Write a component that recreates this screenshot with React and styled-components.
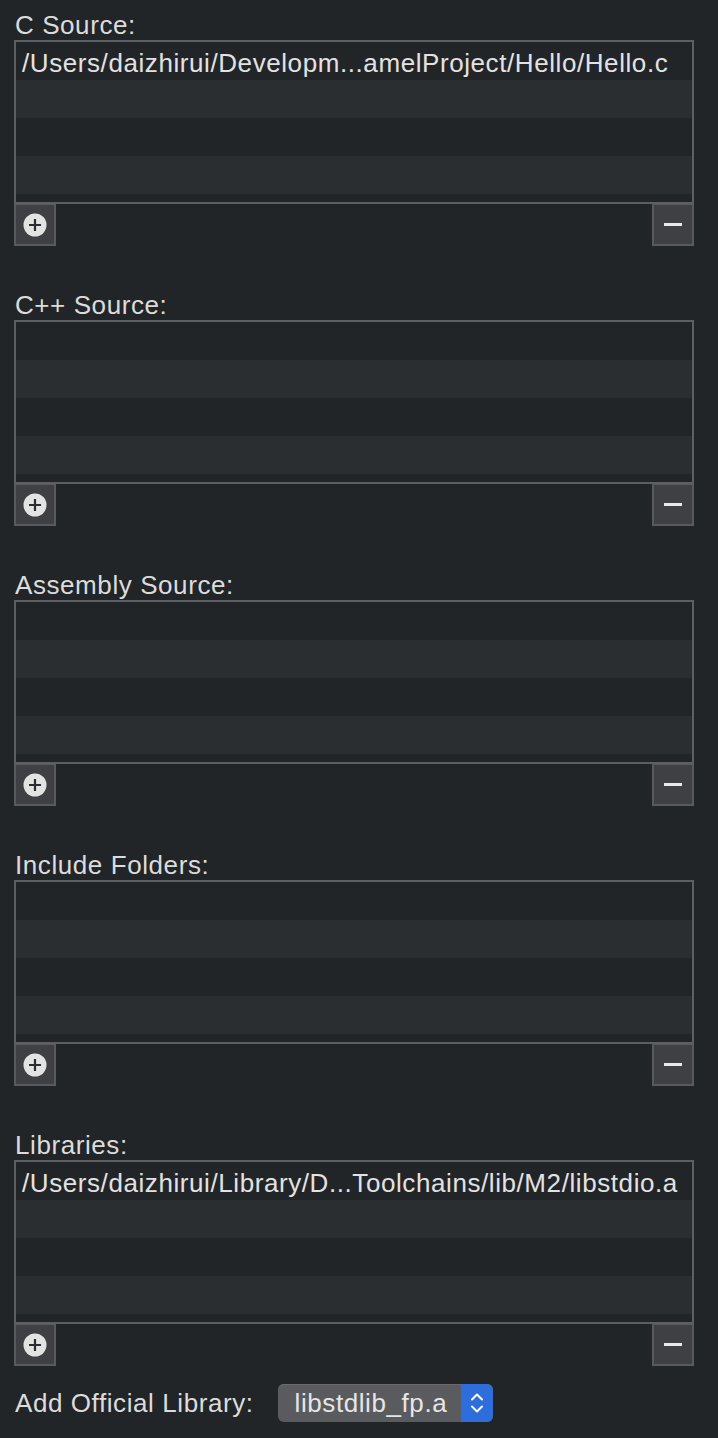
import React from 'react';
import styled, { createGlobalStyle } from "styled-components"

const GlobalStyle = createGlobalStyle`
    html, body {
        margin: 0;
        padding: 0;
        background: #222528;
    }
    body {
        font-family: "Liberation Sans", Arial, sans-serif;
        color: #dedede;
    }
`

const sections = [
    { title: "C Source:", items: ["/Users/daizhirui/Developm...amelProject/Hello/Hello.c"] },
    { title: "C++ Source:", items: [] },
    { title: "Assembly Source:", items: [] },
    { title: "Include Folders:", items: [] },
    { title: "Libraries:", items: ["/Users/daizhirui/Library/D...Toolchains/lib/M2/libstdio.a"] },
]

const PlusIcon = () => (
    <svg width="24" height="24" viewBox="0 0 24 24">
        <circle cx="12" cy="12" r="11.5" fill="#e3e3e3" />
        <path d="M12 6v12M6 12h12" stroke="#2a2c2f" strokeWidth="2.2" />
    </svg>
)

const Chevrons = () => (
    <svg width="16" height="26" viewBox="0 0 16 26">
        <path d="M3 9.5L8 4.5L13 9.5" fill="none" stroke="#fff" strokeWidth="2" strokeLinecap="round" strokeLinejoin="round" />
        <path d="M3 16.5L8 21.5L13 16.5" fill="none" stroke="#fff" strokeWidth="2" strokeLinecap="round" strokeLinejoin="round" />
    </svg>
)

const FileList = ({ title, items }) => {
    const rows = [0, 1, 2, 3, 4].map(i => items[i] || "")
    return (
        <Section>
            <Label>{title}</Label>
            <ListBox>
                {rows.map((text, i) => (
                    <Row key={i} $odd={i % 2 === 1}>{text}</Row>
                ))}
            </ListBox>
            <ButtonBar>
                <SquareButton><PlusIcon /></SquareButton>
                <SquareButton><MinusBar /></SquareButton>
            </ButtonBar>
        </Section>
    )
}

const App = () => {
    return (
        <Wrapper>
            <GlobalStyle />
            {sections.map(s => (
                <FileList key={s.title} title={s.title} items={s.items} />
            ))}
            <OfficialRow>
                <Label>Add Official Library:</Label>
                <Popup>
                    <PopupValue>libstdlib_fp.a</PopupValue>
                    <PopupArrows><Chevrons /></PopupArrows>
                </Popup>
            </OfficialRow>
        </Wrapper>
    )
}

export default App

const Wrapper = styled.div`
    width: 718px;
    height: 1438px;
    padding: 10px 24px 0 14px;
    box-sizing: border-box;
    display: flex;
    flex-direction: column;
    gap: 44px;
    overflow: hidden;
`

const Section = styled.div`
    display: flex;
    flex-direction: column;
`

const Label = styled.div`
    font-size: 26px;
    line-height: 30px;
    letter-spacing: 0.58px;
    padding-left: 1px;
    color: #dcdcdc;
`

const ListBox = styled.div`
    height: 164px;
    border: 2px solid #5d5f62;
    box-sizing: border-box;
    overflow: hidden;
    background: #222528;
`

const Row = styled.div`
    height: 38px;
    box-sizing: border-box;
    padding: 5px 0 0 6px;
    background: ${p => (p.$odd ? "#2b2e31" : "#222528")};
    font-size: 26px;
    line-height: 32px;
    letter-spacing: 0.58px;
    color: #e2e2e2;
    white-space: nowrap;
`

const ButtonBar = styled.div`
    display: flex;
    justify-content: space-between;
    height: 42px;
`

const SquareButton = styled.div`
    width: 42px;
    height: 42px;
    box-sizing: border-box;
    border: 2px solid #585a5d;
    border-top-width: 1px;
    background: #3e4043;
    display: flex;
    align-items: center;
    justify-content: center;
`

const MinusBar = styled.div`
    width: 18px;
    height: 3px;
    background: #e8e8e8;
    margin-top: -1px;
`

const OfficialRow = styled.div`
    display: flex;
    align-items: center;
    gap: 24px;
    margin-top: -26px;
    height: 38px;
`

const Popup = styled.div`
    display: flex;
    height: 38px;
    width: 215px;
    border-radius: 6px;
    overflow: hidden;
    background: #5a5b5e;
    box-shadow: inset 0 1px 0 #6a6b6e;
`

const PopupValue = styled.div`
    flex: 1;
    font-size: 26px;
    line-height: 38px;
    letter-spacing: 0.58px;
    padding-left: 17px;
    color: #e6e6e6;
`

const PopupArrows = styled.div`
    width: 32px;
    background: #2e6ddc;
    display: flex;
    align-items: center;
    justify-content: center;
`
